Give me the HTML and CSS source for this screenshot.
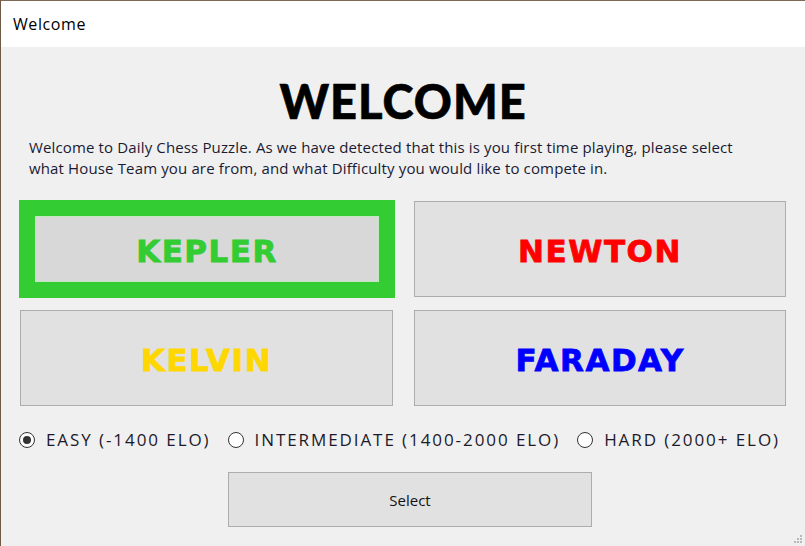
FILE: index.html
```html
<!DOCTYPE html>
<html>
<head>
<meta charset="utf-8">
<link rel="stylesheet" href="styles.css">
</head>
<body>
<div class="window">
  <div class="titlebar">Welcome</div>
  <div class="content">
    <h1 class="heading">WELCOME</h1>
    <p class="intro">Welcome to Daily Chess Puzzle. As we have detected that this is you first time playing, please select<br>what House Team you are from, and what Difficulty you would like to compete in.</p>
    <div class="houses">
      <div class="house house-kepler selected"><div class="house-inner">KEPLER</div></div>
      <div class="house house-newton">NEWTON</div>
      <div class="house house-kelvin">KELVIN</div>
      <div class="house house-faraday">FARADAY</div>
    </div>
    <div class="levels">
      <label class="level"><span class="radio checked"></span>EASY (-1400 ELO)</label>
      <label class="level"><span class="radio"></span>INTERMEDIATE (1400-2000 ELO)</label>
      <label class="level"><span class="radio"></span>HARD (2000+ ELO)</label>
    </div>
    <div class="actions">
      <div class="select-btn">Select</div>
    </div>
  </div>
  <svg class="grip" width="10" height="10" viewBox="0 0 10 10">
    <rect x="7" y="1" width="2" height="2" fill="#b8b8b8"/>
    <rect x="4" y="4" width="2" height="2" fill="#b8b8b8"/>
    <rect x="7" y="4" width="2" height="2" fill="#b8b8b8"/>
    <rect x="1" y="7" width="2" height="2" fill="#b8b8b8"/>
    <rect x="4" y="7" width="2" height="2" fill="#b8b8b8"/>
    <rect x="7" y="7" width="2" height="2" fill="#b8b8b8"/>
  </svg>
</div>
</body>
</html>
```
FILE: styles.css
```css
html, body {
  margin: 0;
  padding: 0;
  width: 805px;
  height: 546px;
  overflow: hidden;
}
.window {
  position: relative;
  width: 805px;
  height: 546px;
  box-sizing: border-box;
  border-top: 1px solid #7d6a55;
  border-left: 1px solid #6e5a44;
  background: #f0f0f0;
  font-family: "Open Sans", sans-serif;
}
.titlebar {
  height: 46px;
  background: #ffffff;
  font-family: "Open Sans", "Noto Sans", sans-serif;
  font-size: 16px;
  letter-spacing: 0.6px;
  color: #000;
  line-height: 46px;
  padding-left: 12px;
}
.content {
  padding: 0 0 0 18px;
}
.heading {
  margin: 26px 0 0 0;
  text-align: center;
  font-family: Lato, sans-serif;
  font-weight: 900;
  font-size: 47px;
  line-height: 56px;
  letter-spacing: 1px;
  color: #000;
  padding-right: 18px;
  -webkit-text-stroke: 0.6px #000;
}
.intro {
  margin: 8px 0 0 10px;
  font-size: 15px;
  letter-spacing: 0.14px;
  line-height: 21px;
  color: #1a1a33;
}
.houses {
  margin-top: 21px;
  display: grid;
  grid-template-columns: 376px 372px;
  grid-template-rows: 98px 96px;
  column-gap: 19px;
  row-gap: 12px;
}
.house {
  box-sizing: border-box;
  background: #e1e1e1;
  border: 1px solid #adadad;
  display: flex;
  align-items: center;
  justify-content: center;
  font-family: "DejaVu Sans", sans-serif;
  font-weight: 700;
  font-size: 31px;
  letter-spacing: 1.5px;
  padding-top: 3px;
}
.house-kepler {
  background: #33cc33;
  border: none;
  padding: 16px;
  align-items: stretch;
  justify-content: stretch;
}
.house-inner {
  flex: 1;
  background: #d8d8d8;
  border: 1px solid #bfe8bf;
  display: flex;
  align-items: center;
  justify-content: center;
  color: #33cc33;
  padding-top: 3px;
  -webkit-text-stroke: 0.8px #33cc33;
}
.house-newton {
  color: #ff0000;
  height: 96px;
  align-self: center;
  -webkit-text-stroke: 0.8px #ff0000;
}
.house-kelvin {
  color: #ffd700;
  width: 373px;
  margin-left: 1px;
  height: 96px;
  -webkit-text-stroke: 0.8px #ffd700;
}
.house-faraday {
  color: #0000ff;
  height: 96px;
  -webkit-text-stroke: 0.8px #0000ff;
}
.levels {
  margin-top: 22px;
  display: flex;
  align-items: center;
  font-size: 17px;
  letter-spacing: 1.92px;
  color: #1c1a2a;
}
.level {
  display: flex;
  align-items: center;
  margin-right: 17px;
}
.radio {
  box-sizing: border-box;
  width: 16px;
  height: 16px;
  border: 1px solid #333;
  border-radius: 50%;
  background: #fff;
  margin-right: 11px;
  display: inline-flex;
  align-items: center;
  justify-content: center;
}
.radio.checked::after {
  content: "";
  width: 8px;
  height: 8px;
  border-radius: 50%;
  background: #333;
}
.actions {
  margin-top: 21px;
  padding-left: 209px;
}
.select-btn {
  box-sizing: border-box;
  width: 364px;
  height: 55px;
  background: #e1e1e1;
  border: 1px solid #adadad;
  display: flex;
  align-items: center;
  justify-content: center;
  font-size: 15px;
  color: #111;
}
.grip {
  position: absolute;
  right: 2px;
  bottom: 2px;
}
```
